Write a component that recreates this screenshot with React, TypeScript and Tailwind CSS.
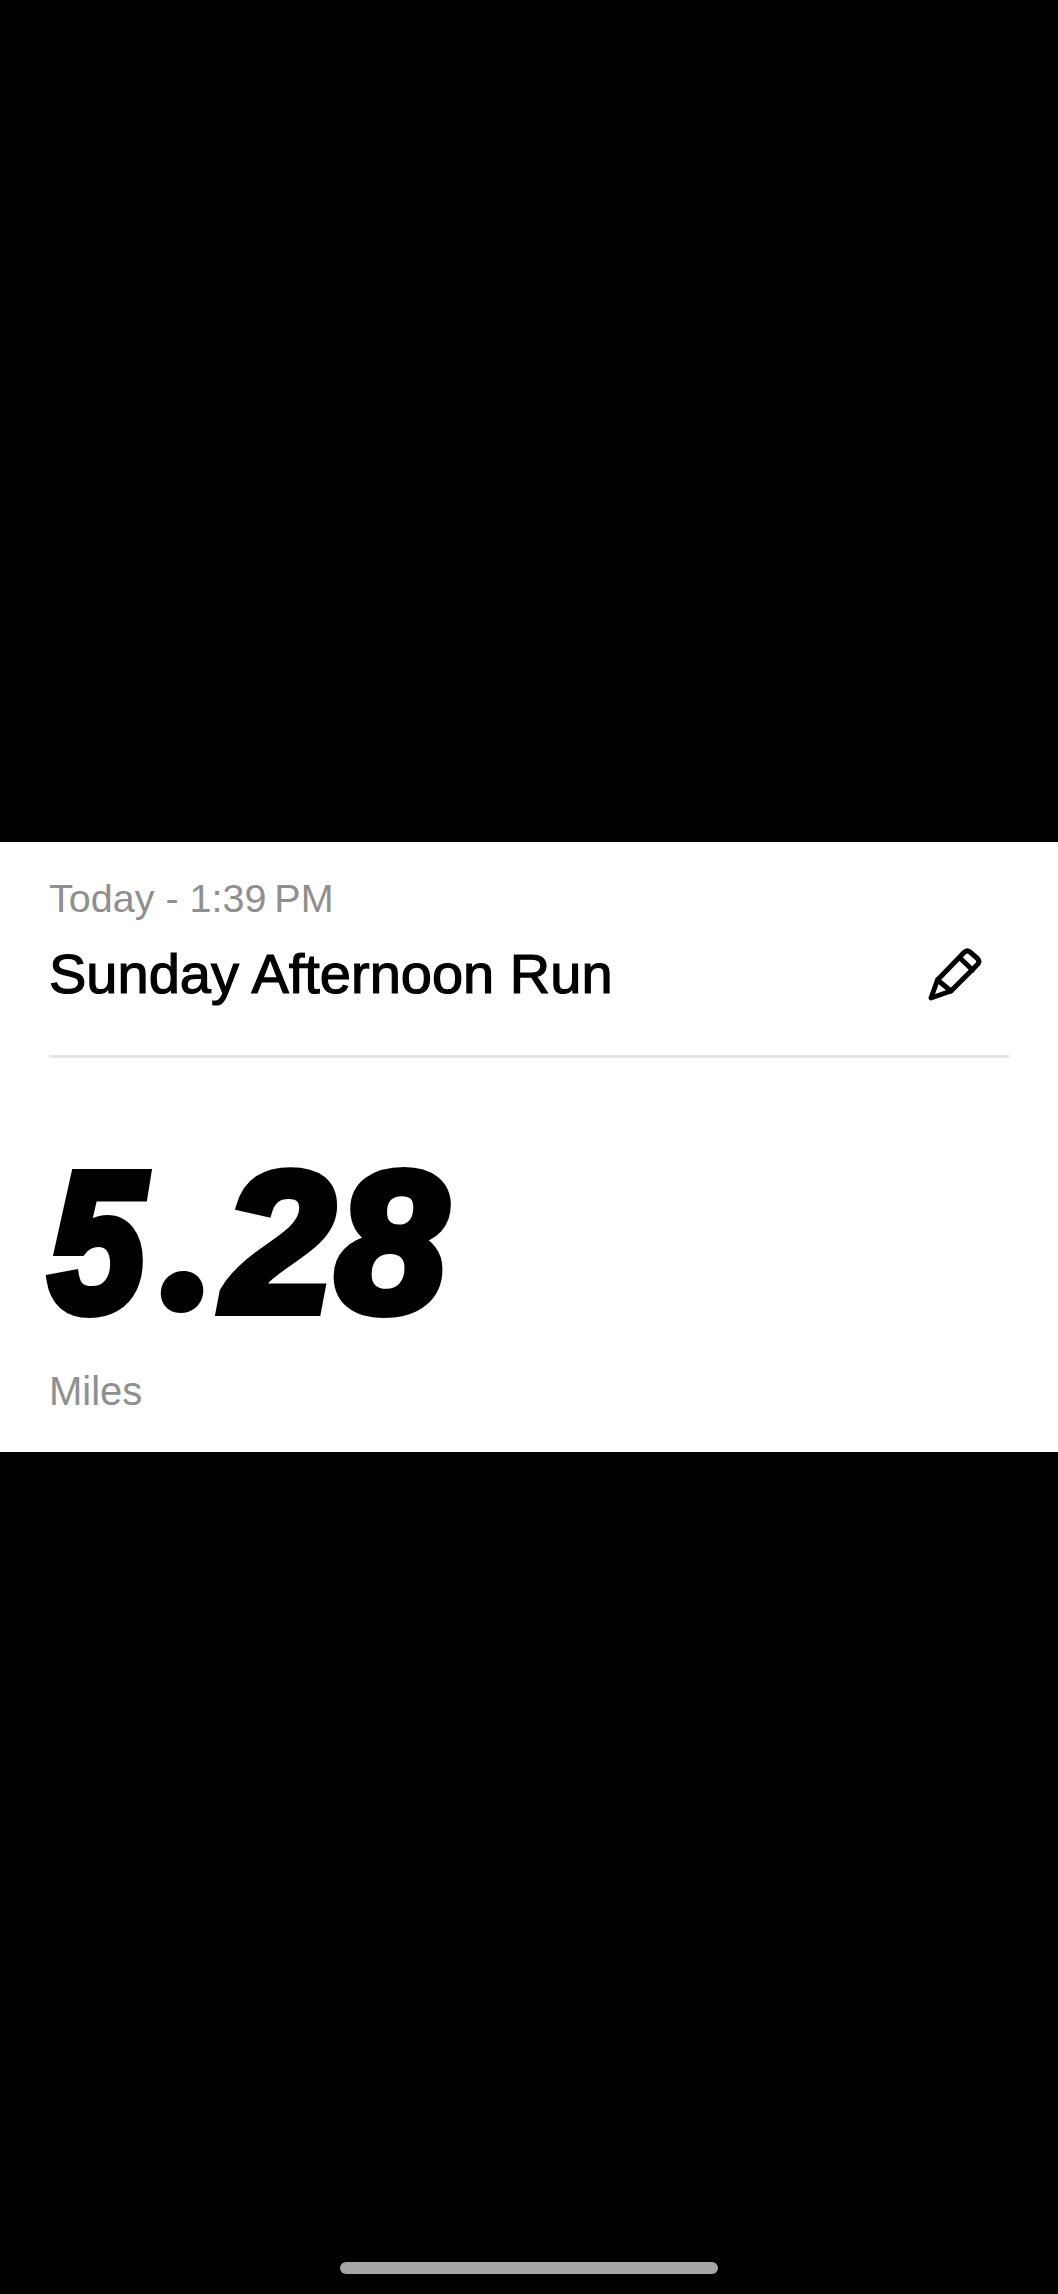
import React from "react";

const PencilIcon: React.FC = () => (
  <svg width="56" height="56" viewBox="0 0 56 56" fill="none" stroke="#000" strokeWidth="5" strokeLinejoin="round" strokeLinecap="round">
    <path d="M4 52 L10.5 34 L37 6.5 Q40 3.5 43 6 L50.5 12.5 Q53.5 15.5 50.5 18.5 L24 45 Z" />
    <path d="M33.5 12.5 L45.5 24" />
    <path d="M10.5 34 L24 45" />
  </svg>
);

const App: React.FC = () => {
  return (
    <div className="h-screen flex flex-col bg-black font-['Liberation_Sans',Arial,sans-serif]">
      <div className="h-[842px] shrink-0" />

      <div className="h-[610px] shrink-0 bg-white px-[49px]">
        {/* Header */}
        <div className="h-[216px] border-b-[3px] border-[#e6e6e6] flex items-start justify-between">
          <div className="pt-[34px]">
            <p className="text-[39.5px] leading-[44px] text-[#8f8f8f]">Today - 1:39{"\u2009"}PM</p>
            <h1 className="mt-[22px] text-[56px] leading-[64px] text-black [-webkit-text-stroke:1.2px_#000]">
              Sunday Afternoon Run
            </h1>
          </div>
          <div className="mt-[104px] mr-[26px]">
            <PencilIcon />
          </div>
        </div>

        {/* Distance */}
        <div className="mt-[86px] h-[190px] text-[198px] leading-[180px] font-bold italic tracking-[2px] text-black [-webkit-text-stroke:10px_#000]">
          <span className="inline-block w-[100px] origin-left scale-x-[0.87]">5</span>
          <span className="inline-block w-[75px] font-['Inter',sans-serif] font-black text-[212px] [-webkit-text-stroke:0px_#000]">.</span>
          28
        </div>
        <p className="mt-[35px] text-[40px] leading-[44px] text-[#8f8f8f]">Miles</p>
      </div>

      <div className="flex-1 flex items-end justify-center pb-[20px]">
        <div className="w-[378px] h-[12px] rounded-full bg-[#a6a6a6]" />
      </div>
    </div>
  );
};

export default App;
